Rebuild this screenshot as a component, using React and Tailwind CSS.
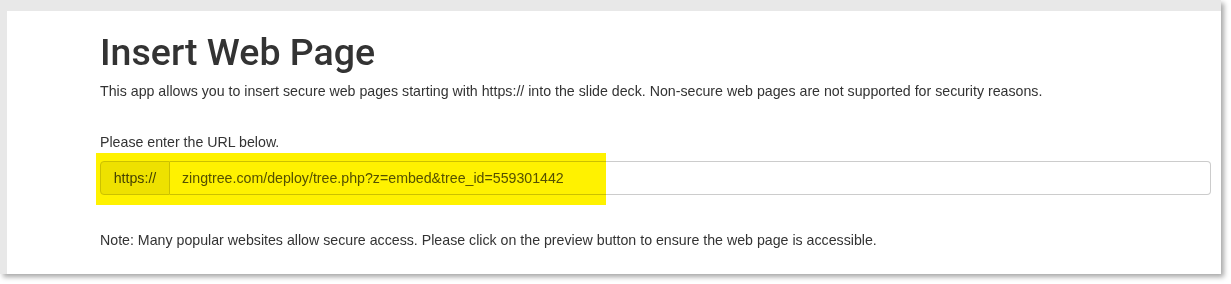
export default function App() {
  const font = { fontFamily: '"Liberation Sans", Arial, Helvetica, sans-serif' };
  return (
    <div className="w-[1231px] h-[284px] bg-white overflow-hidden" style={font}>
      <div className="w-[1221px] h-[274px] bg-[#e8e8e8] pl-[7px] pt-[11px] shadow-[3px_3px_5px_rgba(0,0,0,0.35)]">
        <div className="w-[1214px] h-[263px] bg-white pl-[93px] pr-[10px] text-[#333] text-[14.2px] leading-[20px]">
          <h1
            className="text-[37.5px] leading-[40px] font-medium pt-[21px] mb-[9px] text-[#333]"
            style={{ fontFamily: 'Roboto, "Liberation Sans", Arial, sans-serif' }}
          >
            Insert Web Page
          </h1>
          <p className="mb-[31px]">
            This app allows you to insert secure web pages starting with https:// into the slide deck. Non-secure web pages are not supported for security reasons.
          </p>
          <p className="mb-[9px]">Please enter the URL below.</p>
          <div className="relative">
            <div className="flex h-[34px] w-[1111px]">
              <span className="flex items-center justify-center w-[70px] bg-[#eeeeee] border border-[#cccccc] rounded-l-[4px] text-[#444]">https://</span>
              <div className="flex-1 flex items-center px-[12px] border border-l-0 border-[#cccccc] rounded-r-[4px] text-[#555]">
                zingtree.com/deploy/tree.php?z=embed&amp;tree_id=559301442
              </div>
            </div>
            <div className="absolute left-[-4px] top-[-8px] w-[510px] h-[52px] bg-[#fff200] mix-blend-multiply pointer-events-none" />
          </div>
          <p className="mt-[35px]">
            Note: Many popular websites allow secure access. Please click on the preview button to ensure the web page is accessible.
          </p>
        </div>
      </div>
    </div>
  );
}
